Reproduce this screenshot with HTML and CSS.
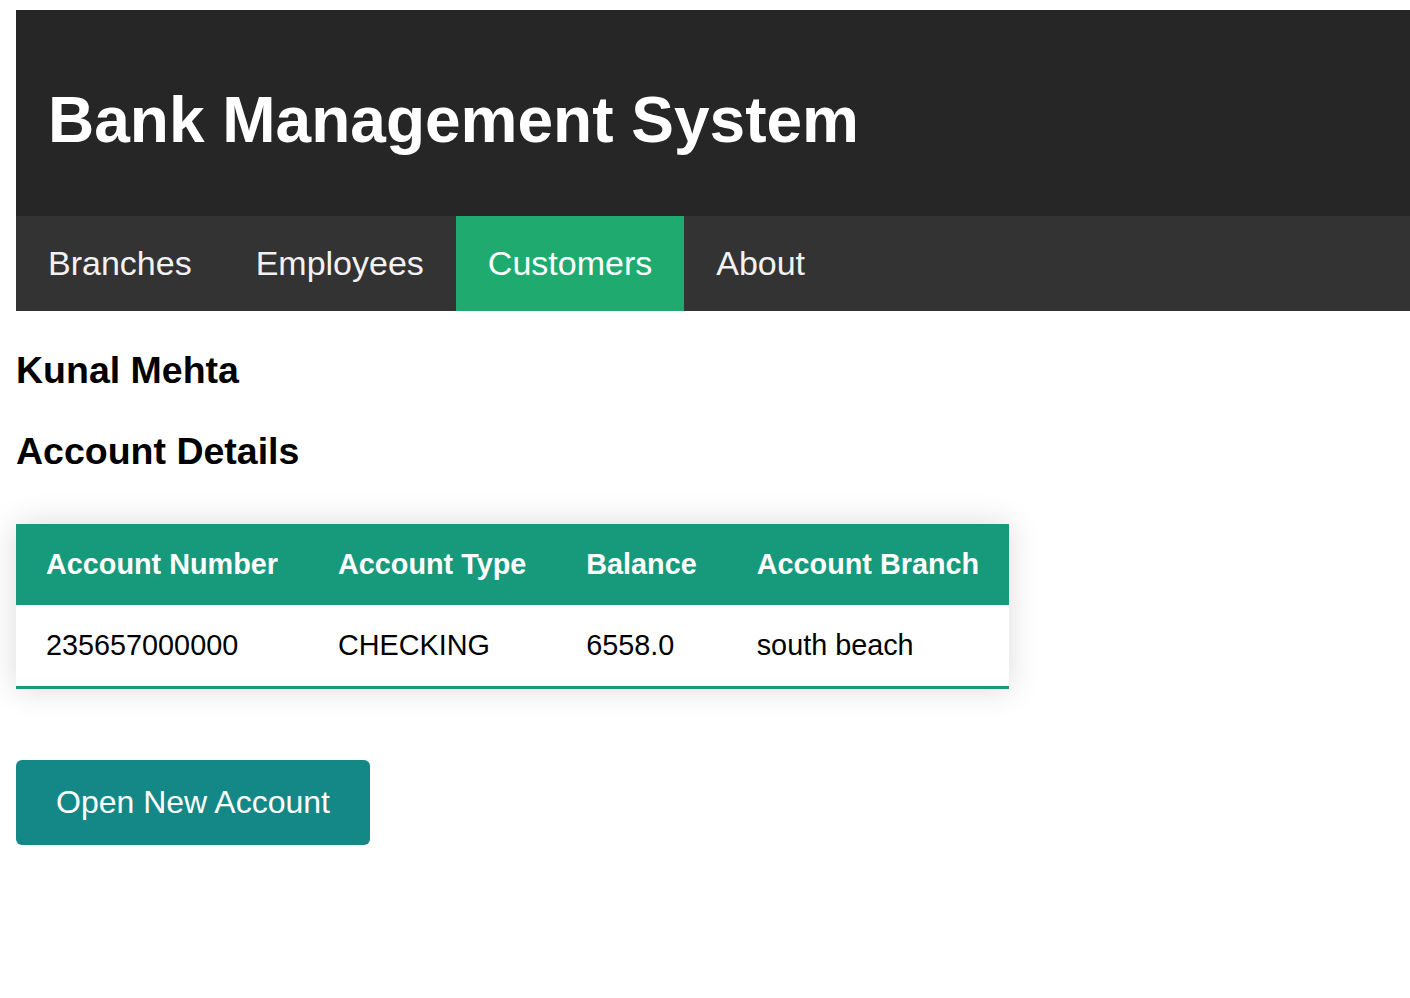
FILE: index.html
```html
<!DOCTYPE html>
<html lang="en">
<head>
<meta charset="utf-8">
<title>Bank Management System</title>
<link rel="stylesheet" href="styles.css">
</head>
<body>
<div class="page">
  <header class="masthead">
    <h1 class="title">Bank Management System</h1>
  </header>
  <nav class="nav">
    <a class="nav-item" href="#">Branches</a>
    <a class="nav-item" href="#">Employees</a>
    <a class="nav-item active" href="#">Customers</a>
    <a class="nav-item" href="#">About</a>
  </nav>
  <main class="content">
    <h2 class="heading first">Kunal Mehta</h2>
    <h2 class="heading">Account Details</h2>
    <table class="accounts">
      <thead>
        <tr>
          <th>Account Number</th>
          <th>Account Type</th>
          <th>Balance</th>
          <th>Account Branch</th>
        </tr>
      </thead>
      <tbody>
        <tr>
          <td>235657000000</td>
          <td>CHECKING</td>
          <td>6558.0</td>
          <td>south beach</td>
        </tr>
      </tbody>
    </table>
    <button class="btn" type="button">Open New Account</button>
  </main>
</div>
</body>
</html>
```

FILE: styles.css
```css
* { box-sizing: border-box; }
html, body { margin: 0; padding: 0; background: #fff; }
body {
  font-family: "Liberation Sans", Arial, Helvetica, sans-serif;
  color: #000;
}
.page {
  padding: 10px 0 0 16px;
}
.masthead {
  background: #262626;
  padding: 74px 32px 58px;
}
.title {
  margin: 0;
  color: #fff;
  font-size: 64px;
  font-weight: bold;
  line-height: 1.15;
}
.nav {
  display: flex;
  background: #333333;
}
.nav-item {
  display: block;
  padding: 28px 32px;
  font-size: 34px;
  line-height: 39px;
  color: #f2f2f2;
  text-decoration: none;
}
.nav-item.active {
  background: #1fab6f;
  color: #fff;
}
.content {
  display: flex;
  flex-direction: column;
  align-items: flex-start;
}
.heading {
  margin: 38px 0 0;
  font-size: 37.5px;
  font-weight: bold;
  line-height: 1.15;
}
.heading + .heading {
  margin-top: 38px;
}
.accounts {
  margin-top: 51px;
  border-collapse: collapse;
  box-shadow: 0 0 30px rgba(0, 0, 0, 0.15);
  border-bottom: 3px solid #17997b;
  font-size: 28.8px;
}
.accounts th, .accounts td {
  padding: 24px 30px;
  line-height: 33px;
  text-align: left;
  white-space: nowrap;
}
.accounts th {
  background: #17997b;
  color: #fff;
  font-weight: bold;
}
.accounts td {
  background: #fff;
  color: #000;
}
.btn {
  margin-top: 71px;
  background: #148886;
  color: #fff;
  border: none;
  border-radius: 6px;
  padding: 24px 40px;
  font-family: inherit;
  font-size: 32px;
  line-height: 37px;
  cursor: pointer;
}
```
